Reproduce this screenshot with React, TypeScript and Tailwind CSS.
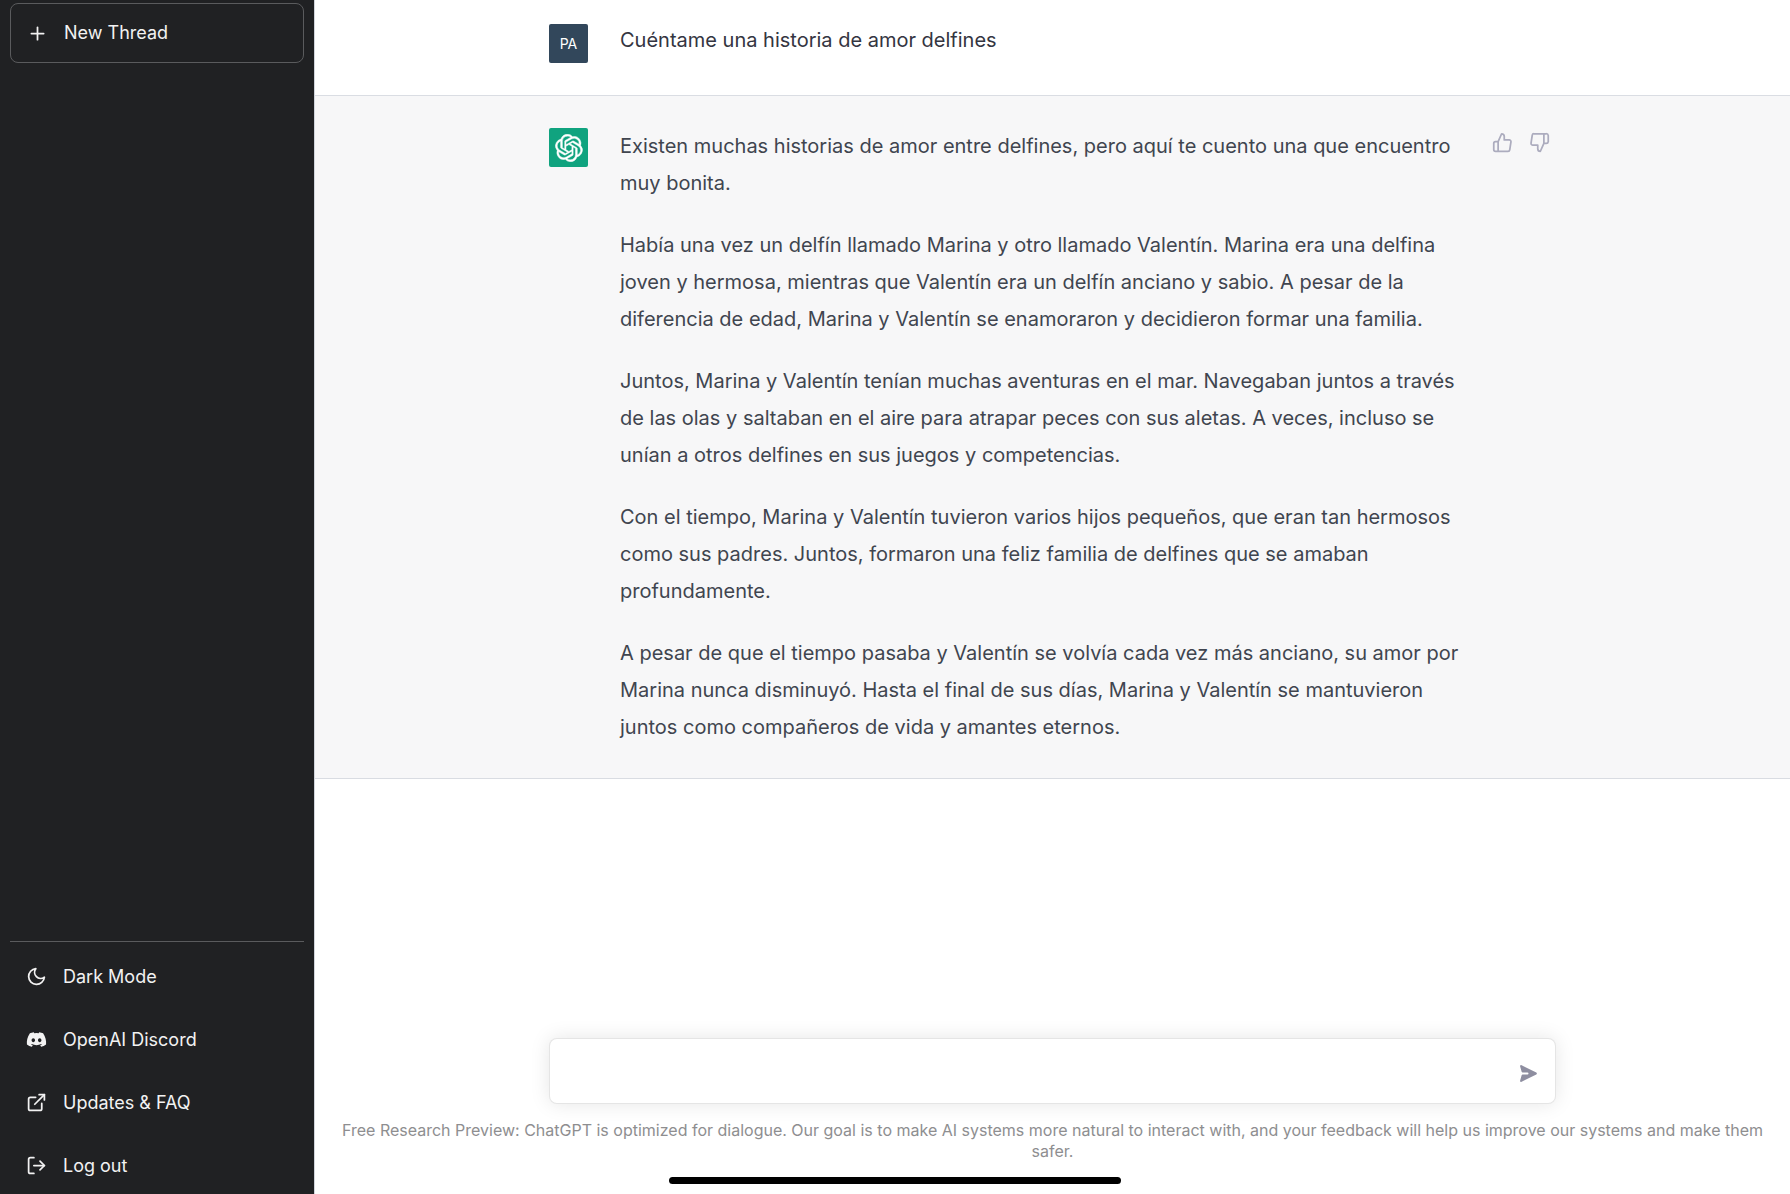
import type { ReactNode } from 'react';
import { FiExternalLink, FiLogOut, FiMoon, FiPlus, FiThumbsDown, FiThumbsUp } from 'react-icons/fi';
import { FaDiscord } from 'react-icons/fa';

const story = [
  'Existen muchas historias de amor entre delfines, pero aquí te cuento una que encuentro muy bonita.',
  'Había una vez un delfín llamado Marina y otro llamado Valentín. Marina era una delfina joven y hermosa, mientras que Valentín era un delfín anciano y sabio. A pesar de la diferencia de edad, Marina y Valentín se enamoraron y decidieron formar una familia.',
  'Juntos, Marina y Valentín tenían muchas aventuras en el mar. Navegaban juntos a través de las olas y saltaban en el aire para atrapar peces con sus aletas. A veces, incluso se unían a otros delfines en sus juegos y competencias.',
  'Con el tiempo, Marina y Valentín tuvieron varios hijos pequeños, que eran tan hermosos como sus padres. Juntos, formaron una feliz familia de delfines que se amaban profundamente.',
  'A pesar de que el tiempo pasaba y Valentín se volvía cada vez más anciano, su amor por Marina nunca disminuyó. Hasta el final de sus días, Marina y Valentín se mantuvieron juntos como compañeros de vida y amantes eternos.',
];

function OpenAILogo() {
  return (
    <svg
      viewBox="0 0 41 41"
      className="size-7"
      fill="currentColor"
      stroke="currentColor"
      strokeWidth="0.7"
      aria-hidden="true"
    >
      <path d="M37.532 16.87a9.963 9.963 0 0 0-.856-8.184 10.078 10.078 0 0 0-10.855-4.835A9.964 9.964 0 0 0 18.306.5a10.079 10.079 0 0 0-9.614 6.977 9.967 9.967 0 0 0-6.664 4.834 10.08 10.08 0 0 0 1.24 11.817 9.965 9.965 0 0 0 .856 8.185 10.079 10.079 0 0 0 10.855 4.835 9.965 9.965 0 0 0 7.516 3.35 10.078 10.078 0 0 0 9.617-6.981 9.967 9.967 0 0 0 6.663-4.834 10.079 10.079 0 0 0-1.243-11.813ZM22.498 37.886a7.474 7.474 0 0 1-4.799-1.735c.061-.033.168-.091.237-.134l7.964-4.6a1.294 1.294 0 0 0 .655-1.134V19.054l3.366 1.944a.12.12 0 0 1 .066.092v9.299a7.505 7.505 0 0 1-7.49 7.496ZM6.392 31.006a7.471 7.471 0 0 1-.894-5.023c.06.036.162.099.237.141l7.964 4.6a1.297 1.297 0 0 0 1.308 0l9.724-5.614v3.888a.12.12 0 0 1-.048.103l-8.051 4.649a7.504 7.504 0 0 1-10.24-2.744ZM4.297 13.62A7.469 7.469 0 0 1 8.2 10.333c0 .068-.004.19-.004.274v9.201a1.294 1.294 0 0 0 .654 1.132l9.723 5.614-3.366 1.944a.12.12 0 0 1-.114.01L7.04 23.856a7.504 7.504 0 0 1-2.743-10.237Zm27.658 6.437-9.724-5.615 3.367-1.943a.121.121 0 0 1 .113-.01l8.052 4.648a7.498 7.498 0 0 1-1.158 13.528v-9.476a1.293 1.293 0 0 0-.65-1.132Zm3.35-5.043c-.059-.037-.162-.099-.236-.141l-7.965-4.6a1.298 1.298 0 0 0-1.308 0l-9.723 5.614v-3.888a.12.12 0 0 1 .048-.103l8.05-4.645a7.497 7.497 0 0 1 11.135 7.763Zm-21.063 6.929-3.367-1.944a.12.12 0 0 1-.065-.092v-9.299a7.497 7.497 0 0 1 12.293-5.756 6.94 6.94 0 0 0-.236.134l-7.965 4.6a1.294 1.294 0 0 0-.654 1.132l-.006 11.225Zm1.829-3.943 4.33-2.501 4.332 2.5v5l-4.331 2.5-4.331-2.5V18Z" />
    </svg>
  );
}

function SendIcon() {
  return (
    <svg viewBox="0 0 20 20" className="size-[21px] rotate-90" fill="currentColor" aria-hidden="true">
      <path d="M10.894 2.553a1 1 0 00-1.788 0l-7 14a1 1 0 001.169 1.409l5-1.429A1 1 0 009 15.571V11a1 1 0 112 0v4.571a1 1 0 00.725.962l5 1.428a1 1 0 001.17-1.408l-7-14z" />
    </svg>
  );
}

function SidebarLink({ icon, children }: { icon: ReactNode; children: ReactNode }) {
  return (
    <a href="#" className="flex h-[57px] items-center gap-4 rounded-md px-4">
      {icon}
      {children}
    </a>
  );
}

function Sidebar() {
  return (
    <aside className="flex w-[315px] shrink-0 flex-col border-r border-gray-300 bg-[#202123] px-[10px] pt-[3px] text-lg text-[#f2f2f2]">
      <button
        type="button"
        className="flex h-[60px] items-center gap-4 rounded-lg border border-[#5a5b5d] px-4 text-left"
      >
        <FiPlus className="size-[21px]" />
        New Thread
      </button>

      <nav className="mt-auto flex flex-col gap-1.5 border-t border-[#5a5b5d] pt-1.5">
        <SidebarLink icon={<FiMoon className="size-[21px]" />}>Dark Mode</SidebarLink>
        <SidebarLink icon={<FaDiscord className="size-[21px]" />}>OpenAI Discord</SidebarLink>
        <SidebarLink icon={<FiExternalLink className="size-[21px]" />}>Updates &amp; FAQ</SidebarLink>
        <SidebarLink icon={<FiLogOut className="size-[21px]" />}>Log out</SidebarLink>
      </nav>
    </aside>
  );
}

export default function App() {
  return (
    <div className="flex min-h-screen bg-white font-['Inter','Liberation_Sans',sans-serif]">
      <Sidebar />

      <div className="flex min-w-0 flex-1 flex-col">
        <main>
          <section className="border-b border-gray-300/80">
            <div className="mx-auto flex max-w-[1007px] gap-8 pt-[22px] pb-8 text-xl leading-[37px] text-[#343541]">
              <div className="mt-0.5 flex size-[39px] shrink-0 items-center justify-center rounded-xs bg-[#32475b] text-sm text-white">
                PA
              </div>
              <p>Cuéntame una historia de amor delfines</p>
            </div>
          </section>

          <section className="border-b border-gray-300/80 bg-[#f7f7f8]">
            <div className="mx-auto flex max-w-[1007px] pt-8 pb-8 text-xl leading-[37px] text-[#40454f]">
              <div className="flex size-[39px] shrink-0 items-center justify-center rounded-xs bg-[#10a37f] text-white">
                <OpenAILogo />
              </div>
              <div className="ml-8 flex min-w-0 flex-1 flex-col gap-[25px]">
                {story.map((paragraph) => (
                  <p key={paragraph}>{paragraph}</p>
                ))}
              </div>
              <div className="ml-6 flex shrink-0 items-start gap-4 pt-1 pr-1.5 text-[#acacbe]">
                <button type="button" aria-label="Buena respuesta">
                  <FiThumbsUp className="size-[21px]" />
                </button>
                <button type="button" aria-label="Mala respuesta">
                  <FiThumbsDown className="size-[21px]" />
                </button>
              </div>
            </div>
          </section>
        </main>

        <footer className="mt-auto px-4 pb-8">
          <form className="mx-auto flex h-[66px] max-w-[1007px] items-center rounded-lg border border-black/10 bg-white pt-1 pr-4 shadow-[0_0_20px_rgba(0,0,0,0.10)]">
            <input type="text" aria-label="Mensaje" className="h-full min-w-0 flex-1 px-5 text-xl outline-none" />
            <button type="button" aria-label="Enviar" className="text-[#8e8ea0]">
              <SendIcon />
            </button>
          </form>
          <p className="mt-4 px-2 text-center text-base leading-[21px] text-[#8e8e90]">
            Free Research Preview: ChatGPT is optimized for dialogue. Our goal is to make AI systems more natural to
            interact with, and your feedback will help us improve our systems and make them safer.
          </p>
        </footer>
      </div>

      {/* Home indicator */}
      <div className="fixed bottom-[10px] left-1/2 h-[7px] w-[452px] -translate-x-1/2 rounded-full bg-black" />
    </div>
  );
}
